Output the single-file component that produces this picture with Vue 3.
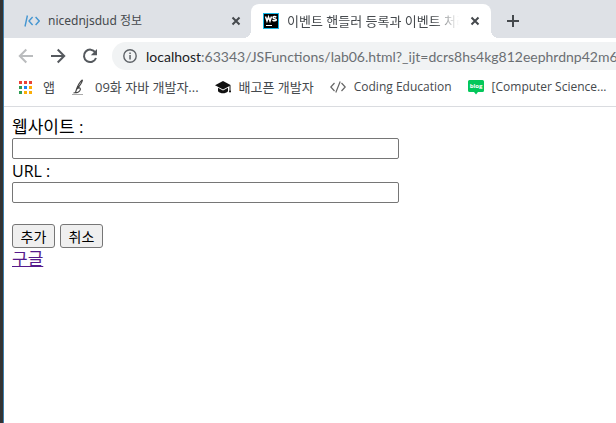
<script setup>
import { ref } from 'vue'

const site = ref('')
const url = ref('')
const host = 'localhost'
const rest = ':63343/JSFunctions/lab06.html?_ijt=dcrs8hs4kg812eephrdnp42m6'
</script>

<template>
  <div class="window">
    <header class="tabs">
      <div class="tab">
        <svg class="ico" viewBox="0 0 16 16" fill="none" stroke="#4596d1" stroke-width="1.4">
          <path d="M3.4 2.5 1 13.5M8.6 4 5 8l3.6 4M11.6 4l3.6 4-3.6 4" />
        </svg>
        <span class="tab-title">nicednjsdud 정보</span>
        <button class="close" aria-label="닫기">
          <svg viewBox="0 0 10 10"><path d="M1.5 1.5l7 7M8.5 1.5l-7 7" /></svg>
        </button>
      </div>
      <div class="tab active">
        <svg class="ico" viewBox="0 0 16 16">
          <rect x=".5" y=".5" width="15" height="15" fill="#000" stroke="#15b5e5" />
          <path d="M2.500 3.500L4 8l1.500-4L7 8l1.500-4.500M13.300 4.300C12.300 3.200 10 3.300 10 4.600c0 1.500 3.300.6 3.300 2.100 0 1.400-2.500 1.500-3.800.4" fill="none" stroke="#fff" stroke-width="1.500" />
          <rect x="3" y="12" width="6" height="1" fill="#fff" />
        </svg>
        <span class="tab-title ko fade">이벤트 핸들러 등록과 이벤트 처리</span>
        <button class="close" aria-label="닫기">
          <svg viewBox="0 0 10 10"><path d="M1.500 1.500l7 7M8.500 1.500l-7 7" /></svg>
        </button>
      </div>
      <button class="new" aria-label="새 탭">
        <svg viewBox="0 0 12 12"><path d="M6 0v12M0 6h12" /></svg>
      </button>
    </header>

    <nav class="toolbar">
      <button class="nav off" aria-label="뒤로">
        <svg viewBox="0 0 16 16"><path d="M15 8H2M8.300 1.500L1.800 8l6.500 6.500" /></svg>
      </button>
      <button class="nav" aria-label="앞으로">
        <svg viewBox="0 0 16 16"><path d="M1 8h13M7.700 1.500L14.200 8l-6.500 6.500" /></svg>
      </button>
      <button class="nav" aria-label="새로고침">
        <svg viewBox="0 0 16 16">
          <path d="M13.300 4.300A6.200 6.200 0 1 0 14 10" />
          <path d="M15 1v6.200H8.800z" class="solid" />
        </svg>
      </button>
      <div class="address">
        <svg class="info" viewBox="0 0 14 14">
          <circle cx="7" cy="7" r="6.200" fill="none" stroke="#5f6368" stroke-width="1.400" />
          <path d="M6.300 6h1.500v4.500H6.300zM6.300 3.400h1.500v1.500H6.300z" fill="#5f6368" />
        </svg>
        <span class="url"><span class="host">{{ host }}</span>{{ rest }}</span>
      </div>
    </nav>

    <nav class="bookmarks">
      <a href="#" class="mark">
        <svg class="ico" viewBox="0 0 16 16">
          <path d="M0 2h3v3H0zM5 2h3v3H5zM10 2h3v3h-3z" fill="#ea4335" />
          <path d="M0 7h3v3H0zM0 12h3v3H0z" fill="#2f9e55" />
          <path d="M5 7h3v3H5z" fill="#1a84f0" />
          <path d="M10 7h3v3h-3zM5 12h3v3H5zM10 12h3v3h-3z" fill="#fbae08" />
        </svg>
        <span class="ko">앱</span>
      </a>
      <a href="#" class="mark">
        <svg class="ico" viewBox="0 0 16 16" fill="none" stroke="#444">
          <path d="M11.500.8C8.500 3 6 8 4.500 13.500M11.500.8C11 4 8.500 7 6 9.500M5.500 10.500c2-2.300 4.300-2 3.800.2-.5 2-3 3.400-4.700 2.800L2.500 14" stroke-width="1.100" />
          <path d="M1 15.500h11" stroke="#aaa" />
        </svg>
        <span class="ko">09화 자바 개발자...</span>
      </a>
      <a href="#" class="mark">
        <svg class="ico" viewBox="0 0 16 16" fill="#111">
          <path d="M8 2l8 4.200-8 4.200L0 6.200z" />
          <path d="M3 8.800l5 2.600 5-2.600v3.400c-2.500 2.700-7.500 2.700-10 0zM14.500 7h1v6h-1z" />
          <circle cx="15" cy="12.500" r="1" />
        </svg>
        <span class="ko">배고픈 개발자</span>
      </a>
      <a href="#" class="mark">
        <svg class="ico" viewBox="0 0 16 16" fill="none" stroke="#666" stroke-width="1.200">
          <path d="M4.500 4L.8 8l3.700 4M11.500 4l3.700 4-3.700 4M10.200 2.500L5.800 13.500" />
        </svg>
        <span>Coding Education</span>
      </a>
      <a href="#" class="mark">
        <svg class="ico" viewBox="0 0 16 16">
          <path d="M1.500 1h13Q16 1 16 2.500v9q0 1.500-1.500 1.500H10l-2 2.500L6 13H1.500Q0 13 0 11.500v-9Q0 1 1.500 1z" fill="#03c75a" />
          <text x="8" y="9" class="blog">blog</text>
        </svg>
        <span>[Computer Science...</span>
      </a>
    </nav>

    <main class="page">
      <form @submit.prevent>
        <label for="site" class="ko">웹사이트 :</label>
        <input id="site" v-model="site" type="text" />
        <label for="url">URL :</label>
        <input id="url" v-model="url" type="text" />
        <div class="actions">
          <button type="submit">추가</button>
          <button type="reset">취소</button>
        </div>
      </form>
      <a class="link ko" href="#">구글</a>
    </main>
  </div>
</template>

<style>
body {
  background: #fff;
}
</style>

<style scoped>
.window {
  box-sizing: border-box;
  min-height: 100vh;
  overflow: hidden;
  border-left: 3px solid #333;
  box-shadow: inset 1px 0 #3d7fae;
  padding-left: 1px;
  font-family: "Open Sans", "Noto Sans CJK KR", sans-serif;
  color: #000;
}
svg {
  display: block;
  flex: none;
}
.ico {
  width: 16px;
  height: 16px;
  flex: none;
}
.tabs {
  display: flex;
  height: 34px;
  padding-top: 4px;
  background: #dee1e6;
  font-family: "Noto Sans", "Noto Sans CJK KR", sans-serif;
  font-size: 12px;
  color: #45494d;
}
.tab {
  box-sizing: border-box;
  position: relative;
  display: flex;
  align-items: center;
  width: 247px;
  padding: 0 7px 0 20px;
  gap: 8px;
}
.active {
  width: 240px;
  padding: 0 8px 0 12px;
  border-radius: 8px 8px 0 0;
  background: #fff;
}
.active::before,
.active::after {
  content: "";
  position: absolute;
  bottom: 0;
  width: 8px;
  height: 8px;
}
.active::before {
  right: 100%;
  background: radial-gradient(circle at 0 0, transparent 8px, #fff 8px);
}
.active::after {
  left: 100%;
  background: radial-gradient(circle at 100% 0, transparent 8px, #fff 8px);
}
.tab-title {
  flex: 1;
  min-width: 0;
  overflow: hidden;
  line-height: 18px;
  white-space: nowrap;
}
.tabs .ko,
.bookmarks .ko {
  font-size: 13px;
}
.fade {
  mask-image: linear-gradient(to right, #000 85%, transparent);
}
.close,
.new,
.nav {
  display: flex;
  align-items: center;
  justify-content: center;
  padding: 0;
  border: 0;
  background: none;
  fill: none;
  stroke: #45494d;
  stroke-width: 2;
}
.close {
  width: 16px;
  height: 16px;
}
.close svg {
  width: 10px;
  height: 10px;
}
.new {
  width: 28px;
  margin-left: 8px;
}
.new svg {
  width: 12px;
  height: 12px;
}
.toolbar {
  display: flex;
  align-items: center;
  height: 36px;
  padding-left: 6px;
}
.nav {
  flex: none;
  width: 32px;
  height: 28px;
  stroke: #55595e;
}
.nav svg {
  width: 16px;
  height: 16px;
}
.off {
  stroke: #babcbe;
}
.solid {
  fill: #55595e;
  stroke: none;
}
.address {
  display: flex;
  align-items: center;
  flex: 1;
  min-width: 0;
  height: 28px;
  margin-left: 6px;
  padding-left: 11px;
  gap: 9px;
  border-radius: 14px 0 0 14px;
  background: #f1f3f4;
  font-family: Lato, sans-serif;
  font-size: 14px;
  color: #6b6f73;
}
.info {
  width: 14px;
  height: 14px;
}
.url {
  overflow: hidden;
  white-space: nowrap;
}
.host {
  color: #202124;
}
.bookmarks {
  display: flex;
  align-items: center;
  height: 26px;
  padding: 0 0 6px 15px;
  gap: 16px;
  border-bottom: 1px solid #dadce0;
  font-size: 12px;
}
.mark {
  display: flex;
  align-items: center;
  flex: none;
  gap: 8px;
  color: #45494d;
  line-height: 18px;
  text-decoration: none;
  white-space: nowrap;
}
.blog {
  fill: #fff;
  font: bold 6px "Open Sans", sans-serif;
  text-anchor: middle;
}
.page {
  padding: 9px 8px;
  font-size: 16px;
  line-height: 22px;
}
.page .ko {
  font-size: 17px;
}
form {
  display: flex;
  flex-direction: column;
  align-items: flex-start;
}
input {
  box-sizing: border-box;
  width: 387px;
  max-width: 100%;
  height: 21px;
  margin: 0 0 1px;
  border: 1px solid #767676;
  border-radius: 2px;
  background: #fff;
}
.actions {
  display: flex;
  gap: 5px;
  margin-top: 20px;
}
.actions button {
  min-width: 43px;
  height: 24px;
  padding: 0 7px;
  border: 1px solid #767676;
  border-radius: 3px;
  background: #efefef;
  color: #000;
  font: 14px/20px "Noto Sans CJK KR", sans-serif;
}
.link {
  color: #551a8b;
}
</style>
